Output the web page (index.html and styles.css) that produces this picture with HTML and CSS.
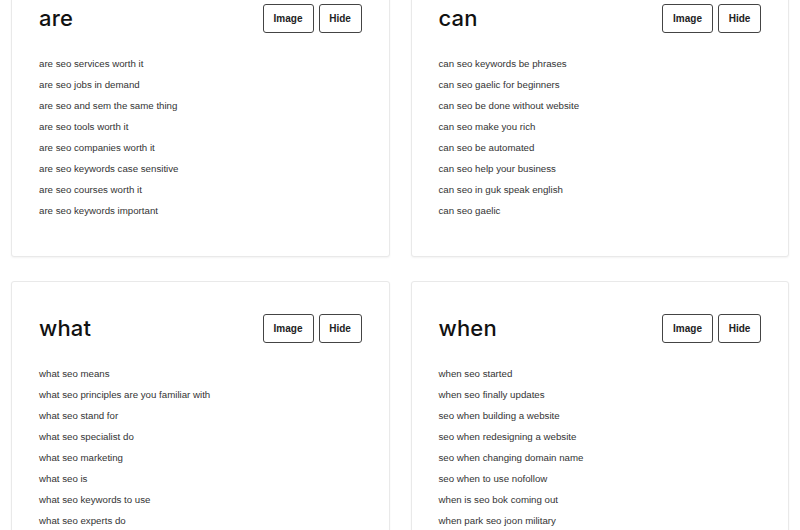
FILE: index.html
```html
<!DOCTYPE html>
<html lang="en">
<head>
<meta charset="utf-8">
<title>SEO questions</title>
<link rel="stylesheet" href="styles.css">
</head>
<body>
<main class="grid">
  <section class="card">
    <header class="card-head">
      <h2 class="card-title">are</h2>
      <div class="actions"><button class="btn btn-image">Image</button><button class="btn btn-hide">Hide</button></div>
    </header>
    <ul class="list">
      <li>are seo services worth it</li>
      <li>are seo jobs in demand</li>
      <li>are seo and sem the same thing</li>
      <li>are seo tools worth it</li>
      <li>are seo companies worth it</li>
      <li>are seo keywords case sensitive</li>
      <li>are seo courses worth it</li>
      <li>are seo keywords important</li>
    </ul>
  </section>
  <section class="card">
    <header class="card-head">
      <h2 class="card-title">can</h2>
      <div class="actions"><button class="btn btn-image">Image</button><button class="btn btn-hide">Hide</button></div>
    </header>
    <ul class="list">
      <li>can seo keywords be phrases</li>
      <li>can seo gaelic for beginners</li>
      <li>can seo be done without website</li>
      <li>can seo make you rich</li>
      <li>can seo be automated</li>
      <li>can seo help your business</li>
      <li>can seo in guk speak english</li>
      <li>can seo gaelic</li>
    </ul>
  </section>
  <section class="card">
    <header class="card-head">
      <h2 class="card-title">what</h2>
      <div class="actions"><button class="btn btn-image">Image</button><button class="btn btn-hide">Hide</button></div>
    </header>
    <ul class="list">
      <li>what seo means</li>
      <li>what seo principles are you familiar with</li>
      <li>what seo stand for</li>
      <li>what seo specialist do</li>
      <li>what seo marketing</li>
      <li>what seo is</li>
      <li>what seo keywords to use</li>
      <li>what seo experts do</li>
    </ul>
  </section>
  <section class="card">
    <header class="card-head">
      <h2 class="card-title">when</h2>
      <div class="actions"><button class="btn btn-image">Image</button><button class="btn btn-hide">Hide</button></div>
    </header>
    <ul class="list">
      <li>when seo started</li>
      <li>when seo finally updates</li>
      <li>seo when building a website</li>
      <li>seo when redesigning a website</li>
      <li>seo when changing domain name</li>
      <li>seo when to use nofollow</li>
      <li>when is seo bok coming out</li>
      <li>when park seo joon military</li>
    </ul>
  </section>
</main>
</body>
</html>
```

FILE: styles.css
```css
* { box-sizing: border-box; }

html, body {
  margin: 0;
  padding: 0;
  background: #ffffff;
  overflow: hidden;
}

body {
  font-family: "Liberation Sans", Arial, sans-serif;
  color: #333333;
}

.grid {
  display: grid;
  grid-template-columns: 1fr 1fr;
  column-gap: 21px;
  row-gap: 24px;
  padding: 0 11px;
  margin-top: -29px;
}

.card {
  background: #ffffff;
  border: 1px solid #e9e9e9;
  border-radius: 3px;
  box-shadow: 0 1px 2px rgba(0, 0, 0, 0.05);
  padding: 32px 27px 35px;
}

.card-head {
  display: flex;
  align-items: center;
  justify-content: space-between;
  height: 29px;
}

.card-title {
  margin: 0;
  font-family: "Inter", "DejaVu Sans", sans-serif;
  font-weight: 500;
  font-size: 22px;
  line-height: 29px;
  color: #111111;
  letter-spacing: 0.2px;
}

.actions {
  display: flex;
  gap: 5px;
}

.btn {
  height: 29px;
  padding: 0;
  background: #ffffff;
  border: 1px solid #444444;
  border-radius: 3px;
  font-family: "Liberation Sans", Arial, sans-serif;
  font-weight: 700;
  font-size: 10px;
  color: #222222;
  text-align: center;
  cursor: pointer;
}

.btn-image { width: 51px; }
.btn-hide { width: 43px; }

.list {
  list-style: none;
  margin: 20px 0 0;
  padding: 0;
}

.list li {
  font-size: 9.7px;
  line-height: 21px;
  color: #333333;
  white-space: nowrap;
}
```
